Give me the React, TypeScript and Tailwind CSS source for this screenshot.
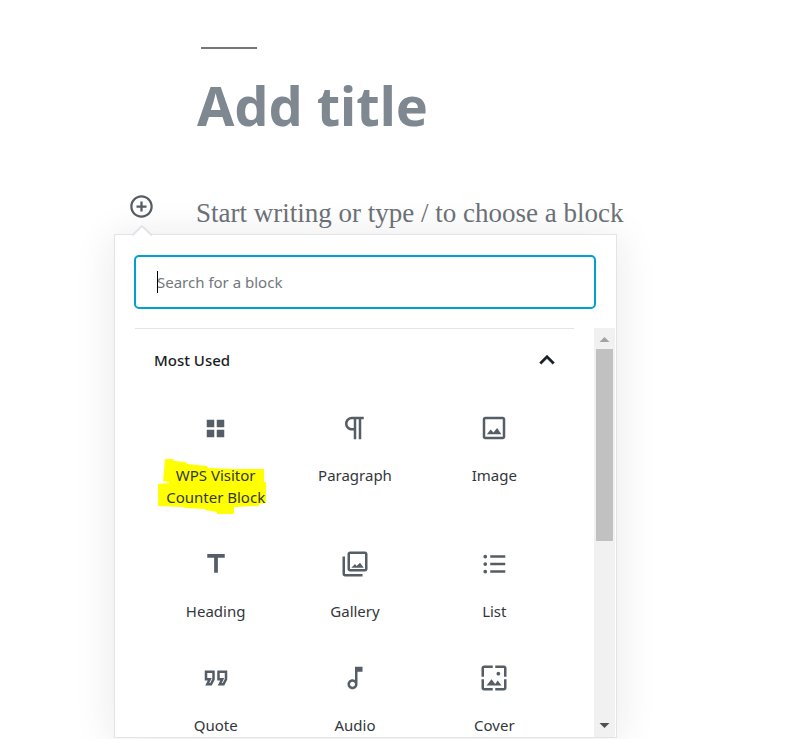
import type { ReactNode } from "react";

type Block = { name: string; icon: ReactNode; highlighted?: boolean };

function Icon({ d }: { d: string }) {
  return (
    <svg viewBox="0 0 24 24" className="size-[30px] fill-[#555d66]" aria-hidden="true">
      <path d={d} />
    </svg>
  );
}

const blocks: Block[] = [
  {
    name: "WPS Visitor Counter Block",
    highlighted: true,
    icon: (
      <svg viewBox="0 0 20 20" className="size-[25px] fill-[#555d66]" aria-hidden="true">
        <path d="M9 9V3H3v6h6zm8 0V3h-6v6h6zm-8 8v-6H3v6h6zm8 0v-6h-6v6h6z" />
      </svg>
    ),
  },
  {
    name: "Paragraph",
    icon: (
      <Icon d="M11 5v7H9.5C7.6 12 6 10.4 6 8.5S7.6 5 9.5 5H11m8-2H9.5C6.5 3 4 5.5 4 8.5S6.5 14 9.5 14H11v7h2V5h2v16h2V5h2V3z" />
    ),
  },
  {
    name: "Image",
    icon: (
      <Icon d="M19 3H5c-1.1 0-2 .9-2 2v14c0 1.1.9 2 2 2h14c1.1 0 2-.9 2-2V5c0-1.1-.9-2-2-2zm0 16H5V5h14v14zM14.500 12l-2.900 3.600-2.300-2.400L6.3 17h11.600z" />
    ),
  },
  { name: "Heading", icon: <Icon d="M5 4v3h5.5v12h3V7H19V4z" /> },
  {
    name: "Gallery",
    icon: (
      <Icon d="M20 4v12H8V4h12m0-2H8c-1.1 0-2 .9-2 2v12c0 1.1.9 2 2 2h12c1.1 0 2-.9 2-2V4c0-1.1-.9-2-2-2zM12 12l1.3 1.5L16 11l3 4H9zM2 6v14c0 1.1.9 2 2 2h14v-2H4V6H2z" />
    ),
  },
  {
    name: "List",
    icon: (
      <Icon d="M9 19h12v-2H9v2zm0-6h12v-2H9v2zm0-8v2h12V5H9zM5 4.5a1.5 1.5 0 1 0 0 3 1.5 1.5 0 0 0 0-3zm0 6a1.5 1.5 0 1 0 0 3 1.5 1.5 0 0 0 0-3zm0 6a1.5 1.5 0 1 0 0 3 1.5 1.5 0 0 0 0-3z" />
    ),
  },
  {
    name: "Quote",
    icon: (
      <Icon d="M18.62 18h-5.24l2-4H13V6h8v7.24L18.62 18zm-2-2h.76L19 12.76V8h-4v4h3.62l-2 4zm-8 2H3.38l2-4H3V6h8v7.24L8.62 18zm-2-2h.76L9 12.76V8H5v4h3.62l-2 4z" />
    ),
  },
  {
    name: "Audio",
    icon: (
      <Icon d="M12 3l.01 10.55c-.59-.34-1.27-.55-2-.55C7.79 13 6 14.79 6 17s1.79 4 4.01 4S14 19.21 14 17V7h4V3h-6zm-1.99 16c-1.1 0-2-.9-2-2s.9-2 2-2 2 .9 2 2-.9 2-2 2z" />
    ),
  },
  {
    name: "Cover",
    icon: (
      <Icon d="M4 4h7V2H4c-1.1 0-2 .9-2 2v7h2V4zm6 9l-4 5h12l-3-4-2.03 2.71L10 13zm7-4.5c0-.83-.67-1.5-1.5-1.5S14 7.67 14 8.5s.67 1.5 1.5 1.5S17 9.33 17 8.5zM20 2h-7v2h7v7h2V4c0-1.1-.9-2-2-2zm0 18h-7v2h7c1.1 0 2-.9 2-2v-7h-2v7zM4 13H2v7c0 1.1.9 2 2 2h7v-2H4v-7z" />
    ),
  },
];

/* Yellow marker stroke painted behind a block's label */
function Marker() {
  return (
    <svg viewBox="0 0 108 56" className="absolute -top-1.5 left-1/2 -ml-[58px] h-14 w-[108px] fill-[#ffff00]" aria-hidden="true">
      <path d="M7 1h8l1 2 12 1 1 2 20 2 1 2 26 1h30v13h2v21l-7 1v2l-25 1v9h-9v-1l-8-1v-2l-12-2v-1l-20-1-1-1-26-1V26l11-1v-1l-6-1z" />
    </svg>
  );
}

function BlockItem({ block }: { block: Block }) {
  return (
    <button type="button" className="flex flex-col items-center px-3 pt-5 pb-[21px]">
      <span className="flex size-[30px] items-center justify-center">{block.icon}</span>
      <span className="relative mt-[21px] block">
        {block.highlighted && <Marker />}
        <span className="relative">{block.name}</span>
      </span>
    </button>
  );
}

function Scrollbar() {
  return (
    <div className="flex w-[21px] shrink-0 flex-col items-center bg-[#f1f1f1]" aria-hidden="true">
      <svg viewBox="0 0 21 21" className="size-[21px] shrink-0 fill-[#a3a3a3]">
        <path d="M5.500 14h10l-5-5z" />
      </svg>
      <div className="h-[192px] w-[17px] bg-[#c1c1c1]" />
      <svg viewBox="0 0 21 21" className="mt-auto size-[21px] shrink-0 fill-[#505050]">
        <path d="M5.500 7h10l-5 5z" />
      </svg>
    </div>
  );
}

function Inserter() {
  return (
    <section
      aria-label="Add block"
      className="relative w-[503px] max-w-full border border-[#e2e4e7] bg-white shadow-[0_3px_38px_rgba(25,30,35,0.1)]"
    >
      <svg viewBox="0 0 20 11" className="absolute -top-2.5 left-[17px] h-[11px] w-5" aria-hidden="true">
        <path d="M0 11L10 1l10 10z" fill="#fff" />
        <path d="M0 10.500L10 1l10 9.500" fill="none" stroke="#e2e4e7" strokeWidth="2" />
      </svg>
      <div className="relative mx-[19px] mt-5">
        <input
          type="search"
          aria-label="Search for a block"
          placeholder="Search for a block"
          className="block h-[54px] w-[462px] max-w-full rounded-[5px] border-2 border-[#00a0d2] bg-white px-[21px] text-[15px] text-[#32373c] outline-none placeholder:text-[#72777c] placeholder:opacity-100"
        />
        <span className="absolute top-4 left-[23px] h-[22px] w-px bg-black" />
      </div>
      <div className="mt-[19px] mr-px ml-5 flex h-[409px]">
        <div className="mr-5 grow overflow-hidden border-t border-[#e2e4e7]">
          <h2>
            <button
              type="button"
              aria-expanded="true"
              className="flex h-[62px] w-full items-center justify-between pr-3 pl-[19px] text-[15px] font-medium text-[#191e23]"
            >
              Most Used
              <svg viewBox="0 0 24 24" className="size-[30px] fill-[#191e23]" aria-hidden="true">
                <path d="M12 8l-6 6 1.410 1.410L12 10.830l4.590 4.580L18 14z" stroke="#191e23" strokeWidth=".3" />
              </svg>
            </button>
          </h2>
          <div className="grid grid-cols-3 pt-0.5 pr-2.5 pl-[11px] text-[15px] leading-[22px] text-[#32373c]">
            {blocks.map((block) => (
              <BlockItem key={block.name} block={block} />
            ))}
          </div>
        </div>
        <Scrollbar />
      </div>
    </section>
  );
}

export default function App() {
  return (
    <main className="overflow-hidden bg-white pt-[47px] pb-px pl-[114px] font-['Noto_Sans','Segoe_UI',sans-serif]">
      <div className="ml-[87px] h-0.5 w-14 bg-[#767676]" />
      <input
        type="text"
        aria-label="Title"
        placeholder="Add title"
        className="mt-4 ml-[83px] block h-20 w-[500px] max-w-full text-[54px] font-bold outline-none placeholder:text-[#7f8790] placeholder:opacity-100"
      />
      <div className="mt-11 flex h-[45px] items-start">
        <button type="button" aria-label="Add block" className="mt-[5px] ml-[15px]">
          <svg viewBox="0 0 20 20" className="size-[25px] fill-[#555d66]" aria-hidden="true">
            <path d="M10 1c-5 0-9 4-9 9s4 9 9 9 9-4 9-9-4-9-9-9zm0 16.200c-4 0-7.200-3.200-7.200-7.200s3.200-7.200 7.200-7.200 7.200 3.200 7.200 7.200-3.200 7.200-7.200 7.200zM10.900 6H9.100v3.100H6v1.800h3.100V14h1.800v-3.100H14V9.100h-3.100V6z" />
          </svg>
        </button>
        <input
          type="text"
          aria-label="Empty block"
          placeholder="Start writing or type / to choose a block"
          className="mt-1 ml-[42px] h-10 w-[500px] bg-transparent font-['Liberation_Serif',serif] text-[27px] outline-none placeholder:text-[#6c7278] placeholder:opacity-100"
        />
      </div>
      <Inserter />
    </main>
  );
}
